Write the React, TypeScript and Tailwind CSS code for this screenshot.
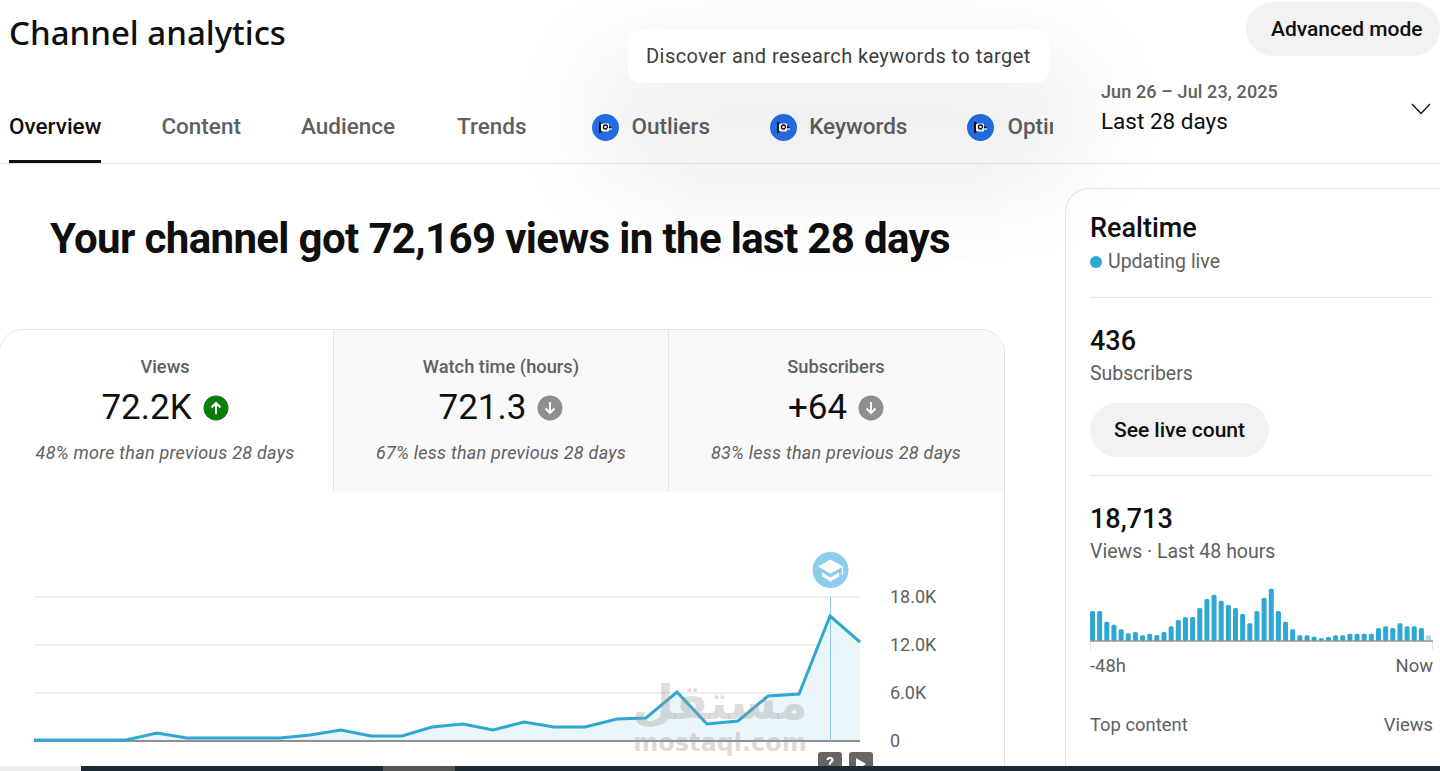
const linePoints = [
  [34, 740], [126, 740], [157, 733], [187, 738], [280, 738], [310, 735], [341, 730], [371, 736], [402, 736],
  [432, 727], [463, 724], [493, 730], [524, 722], [554, 727], [585, 727], [617, 719], [646, 718], [677, 692],
  [707, 724], [738, 721], [768, 696], [799, 694], [830, 616], [860, 642],
];

// tops measured off the reference, baseline is 213 in the same units
const barTops = [
  123, 123, 155, 164, 178, 190, 186, 196, 191, 195, 186, 169, 150, 142, 141, 114, 87, 74, 92, 105, 114, 132, 160, 123,
  83, 56, 123, 155, 178, 196, 196, 200, 205, 201, 196, 196, 191, 191, 191, 191, 174, 169, 174, 160, 169, 169, 174, 196,
];

const tiles = [
  { label: "Views", value: "72.2K", note: "48% more than previous 28 days", up: true },
  { label: "Watch time (hours)", value: "721.3", note: "67% less than previous 28 days", up: false },
  { label: "Subscribers", value: "+64", note: "83% less than previous 28 days", up: false },
];

function VidIqIcon() {
  return (
    <svg width="27" height="27" viewBox="0 0 27 27" className="shrink-0">
      <circle cx="13.5" cy="13.5" r="13.5" fill="#2470e8" />
      <path d="M7 7.5 L7 19.5 L20 13.5 Z" fill="#111" />
      <rect x="9" y="9.5" width="8" height="8" rx="1" fill="#fff" />
      <circle cx="13.5" cy="13" r="2" fill="none" stroke="#111" strokeWidth="1.3" />
      <path d="M15.2 14.8 L20 15.2" stroke="#fff" strokeWidth="1.2" />
    </svg>
  );
}

function Trend({ up }: { up: boolean }) {
  return (
    <svg width="26" height="26" viewBox="0 0 26 26" className="shrink-0">
      <circle cx="13" cy="13" r="12.5" fill={up ? "#0a7d0a" : "#8f8f8f"} />
      <path
        d={up ? "M13 19 V8 M8.5 12.5 L13 8 L17.5 12.5" : "M13 7 V18 M8.5 13.5 L13 18 L17.5 13.5"}
        stroke="#fff"
        strokeWidth="2"
        fill="none"
      />
    </svg>
  );
}

function MetricTile({ label, value, note, up, first }: { label: string; value: string; note: string; up: boolean; first: boolean }) {
  return (
    <div className={first ? "flex h-[162px] w-[333px] flex-col items-center bg-white pt-[26px] pr-[3px]" : "flex h-[162px] w-[335px] flex-col items-center border-l border-[#e5e5e5] bg-[#f9f9f9] pt-[26px]"}>
      <div className="text-[18.3px] leading-[22px] font-medium text-[#606060]">{label}</div>
      <div className="mt-[8px] flex h-[44px] items-center gap-[11px]">
        <span className="text-[35px] leading-[44px] text-[#0f0f0f]">{value}</span>
        <Trend up={up} />
      </div>
      <div className="mt-[11px] text-[18px] leading-[24px] tracking-[0.25px] text-[#606060] italic">{note}</div>
    </div>
  );
}

function ViewsChart() {
  const line = linePoints.map((p) => p.join(",")).join(" ");
  return (
    <svg width="880" height="279" viewBox="0 492 880 279" className="block shrink-0">
      {[597, 645, 693].map((y) => (
        <line key={y} x1="34" x2="860" y1={y} y2={y} stroke="#eeeeee" strokeWidth="2" />
      ))}
      <polygon points={`34,741 ${line} 860,741`} fill="#ebf6fa" />
      <line x1="34" x2="860" y1="741" y2="741" stroke="#909090" strokeWidth="2" />
      <line x1="830.5" x2="830.5" y1="597" y2="741" stroke="#8ccdec" strokeWidth="1" />
      <polyline points={line} fill="none" stroke="#2ea8d0" strokeWidth="3" strokeLinejoin="miter" />
      <circle cx="830.5" cy="570" r="18" fill="#8ccdec" />
      <path d="M830.5 559.5 L843 566.5 L830.5 573.5 L818 566.5 Z" fill="#fff" />
      <path d="M822 572.5 L830.5 577.5 L839 572.5 L839 576.5 L830.5 581.5 L822 576.5 Z" fill="#fff" />
      <path d="M842.5 567 V575" stroke="#fff" strokeWidth="1.4" />
    </svg>
  );
}

function LiveBars() {
  return (
    <svg width="344" height="68" viewBox="0 0 344 68" className="block">
      {barTops.map((top, i) => {
        const h = (213 - top) / 3;
        return (
          <rect
            key={i}
            x={i * 7.15}
            y={53 - h}
            width="5"
            height={h}
            rx="1.5"
            fill={i === barTops.length - 1 ? "#a9dcee" : "#2ea8d0"}
          />
        );
      })}
      <line x1="0" x2="343" y1="53" y2="53" stroke="#909090" strokeWidth="1.5" />
      <line x1="0.5" x2="0.5" y1="54" y2="62" stroke="#e5e5e5" />
      <line x1="342.5" x2="342.5" y1="54" y2="62" stroke="#e5e5e5" />
    </svg>
  );
}

export default function App() {
  return (
    <div className="relative h-[771px] w-[1440px] overflow-hidden bg-white font-['Roboto',sans-serif] text-[#0f0f0f]">
      {/* header */}
      <header className="h-[164px] border-b border-[#e5e5e5]">
        <div className="flex h-[78px] items-start justify-between pt-[2px] pl-[9px]">
          <h1 className="mt-[9px] font-['Noto_Sans',sans-serif] text-[33px] leading-[44px] font-medium">Channel analytics</h1>
          <button className="flex h-[54px] w-[194px] items-center rounded-full bg-[#f2f2f2] pt-[2px] pl-[25px] text-[21px] font-medium">Advanced mode</button>
        </div>
        <div className="flex h-[85px] pl-[9px]">
          <nav className="flex w-[1044px] shrink-0 overflow-hidden text-[22.5px] font-medium text-[#606060]">
            <a className="flex h-[85px] shrink-0 items-center border-b-[3px] border-[#0f0f0f] pt-[15px] text-[#0f0f0f]">Overview</a>
            <a className="ml-[60px] flex h-[85px] shrink-0 items-center pt-[13px]">Content</a>
            <a className="ml-[60px] flex h-[85px] shrink-0 items-center pt-[13px]">Audience</a>
            <a className="ml-[62px] flex h-[85px] shrink-0 items-center pt-[13px]">Trends</a>
            <a className="ml-[65px] flex h-[85px] shrink-0 items-center gap-[13px] pt-[13px]"><VidIqIcon />Outliers</a>
            <a className="ml-[60px] flex h-[85px] shrink-0 items-center gap-[12px] pt-[13px]"><VidIqIcon />Keywords</a>
            <a className="ml-[60px] flex h-[85px] shrink-0 items-center gap-[13px] pt-[13px]"><VidIqIcon />Optimize</a>
          </nav>
          <div className="ml-[48px] flex flex-1 items-start justify-between pr-[9px] pt-[2px]">
            <div>
              <div className="text-[18px] leading-[24px] tracking-[0.12px] font-medium text-[#606060]">Jun 26 – Jul 23, 2025</div>
              <div className="mt-[2px] text-[22.5px] leading-[30px]">Last 28 days</div>
            </div>
            <svg width="20" height="12" viewBox="0 0 20 12" className="mt-[23px]">
              <path d="M1 1 L10 10.5 L19 1" stroke="#0f0f0f" strokeWidth="1.3" fill="none" />
            </svg>
          </div>
        </div>
      </header>

      <main className="flex">
        {/* left column */}
        <section className="w-[1065px] shrink-0">
          <h2 className="mt-[47px] ml-[50px] text-[42px] leading-[56px] font-bold tracking-[-0.64px] whitespace-nowrap">Your channel got 72,169 views in the last 28 days</h2>
          <div className="mt-[62px] ml-[-1px] h-[500px] w-[1006px] overflow-hidden rounded-t-[24px] border border-[#e5e5e5]">
            <div className="flex">
              {tiles.map((t, i) => (
                <MetricTile key={t.label} {...t} first={i === 0} />
              ))}
            </div>
            <div className="relative flex">
              <ViewsChart />
              <div className="mt-[80px] flex flex-col text-[18px] text-[#606060]">
                <span className="ml-[10px] flex h-[48px] items-center">18.0K</span>
                <span className="ml-[10px] flex h-[48px] items-center">12.0K</span>
                <span className="ml-[10px] flex h-[48px] items-center">6.0K</span>
                <span className="ml-[10px] flex h-[48px] items-center">0</span>
              </div>
              {/* watermark */}
              <div className="absolute top-[185px] left-[632px] flex w-[176px] flex-col items-center font-['DejaVu_Sans',sans-serif] text-[#9a9a9a]/35">
                <span className="text-[48px] leading-[50px] font-bold">مستقل</span>
                <span className="mt-[4px] text-[24px] leading-[24px] font-bold">mostaql.com</span>
              </div>
              {/* timeline keys */}
              <span className="absolute top-[260px] left-[818px] flex h-[22px] w-[24px] justify-center rounded-[3px] bg-[#666666] text-[15px] leading-[22px] font-bold text-white">?</span>
              <span className="absolute top-[260px] left-[849px] flex h-[22px] w-[24px] justify-center rounded-[3px] bg-[#666666] pt-[6px]">
                <svg width="10" height="12" viewBox="0 0 10 12"><path d="M0 0 L10 6 L0 12 Z" fill="#fff" /></svg>
              </span>
            </div>
          </div>
        </section>

        {/* realtime */}
        <aside className="mt-[24px] h-[640px] flex-1 rounded-tl-[24px] border-t border-l border-[#e5e5e5] pt-[23px] pl-[24px]">
          <div className="w-[343px]">
            <div className="text-[27px] leading-[32px] font-medium">Realtime</div>
            <div className="mt-[5px] flex h-[26px] items-center gap-[6px] text-[19.5px] text-[#606060]">
              <span className="h-[12px] w-[12px] rounded-full bg-[#2ea8d0]" />
              Updating live
            </div>
            <div className="mt-[22px] border-t border-[#e5e5e5] pt-[27px]">
              <div className="text-[27px] leading-[32px] font-medium">436</div>
              <div className="mt-[4px] text-[19.5px] leading-[26px] text-[#606060]">Subscribers</div>
              <button className="mt-[16px] h-[54px] w-[179px] rounded-full bg-[#f2f2f2] pt-[2px] text-[21px] font-medium">See live count</button>
            </div>
            <div className="mt-[18px] border-t border-[#e5e5e5] pt-[27px]">
              <div className="text-[27px] leading-[32px] font-medium">18,713</div>
              <div className="mt-[4px] text-[19.5px] leading-[26px] text-[#606060]">Views · Last 48 hours</div>
              <div className="mt-[23px]"><LiveBars /></div>
              <div className="mt-[-2px] flex justify-between text-[18.4px] leading-[24px] text-[#606060]">
                <span>-48h</span>
                <span>Now</span>
              </div>
              <div className="mt-[35px] flex justify-between text-[18.4px] leading-[24px] text-[#606060]">
                <span>Top content</span>
                <span>Views</span>
              </div>
            </div>
          </div>
        </aside>
      </main>

      {/* tooltip */}
      <div className="absolute top-[30px] left-[628px] flex h-[53px] w-[421px] items-center rounded-[12px] bg-white pb-[2px] pl-[18px] text-[20px] tracking-[0.45px] text-[#3c3c3c] shadow-[0_60px_110px_30px_rgba(0,0,0,0.08),0_150px_150px_0_rgba(0,0,0,0.02)]">
        Discover and research keywords to target
      </div>

      {/* strip of the taskbar cut off at the bottom */}
      <div className="absolute inset-x-0 bottom-0 flex h-[5px] bg-[#1c2a33]">
        <span className="w-[81px] bg-[#eeeeee]" />
        <span className="ml-[302px] w-[72px] bg-[#555555]" />
      </div>
    </div>
  );
}
